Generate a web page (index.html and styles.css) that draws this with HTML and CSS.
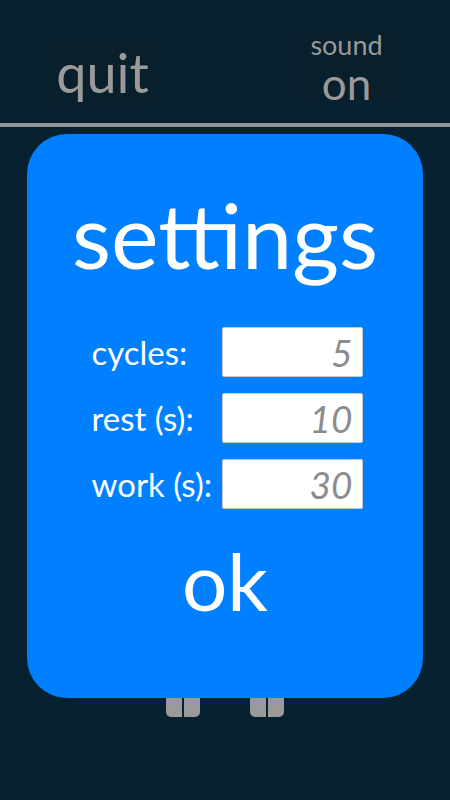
FILE: index.html
```html
<!DOCTYPE html>
<html lang="en">
<head>
<meta charset="utf-8">
<title>settings</title>
<link rel="stylesheet" href="styles.css">
</head>
<body>
<div class="screen">
  <header class="topbar">
    <button class="top-btn quit">quit</button>
    <button class="top-btn sound"><span class="sound-label">sound</span><span class="sound-state">on</span></button>
  </header>
  <div class="rule"></div>
  <main class="stage">
    <div class="controls">
      <div class="pause"><span class="half left"></span><span class="half right"></span></div>
      <div class="pause"><span class="half left"></span><span class="half right"></span></div>
    </div>
  </main>
  <section class="modal">
    <h1 class="title">settings</h1>
    <form class="form">
      <label class="label" for="cycles">cycles:</label>
      <input class="field" id="cycles" type="text" placeholder="5">
      <label class="label" for="rest">rest (s):</label>
      <input class="field" id="rest" type="text" placeholder="10">
      <label class="label" for="work">work (s):</label>
      <input class="field" id="work" type="text" placeholder="30">
    </form>
    <button class="ok">ok</button>
  </section>
</div>
</body>
</html>
```
FILE: styles.css
```css
* { box-sizing: border-box; }
html, body {
  margin: 0;
  padding: 0;
  background: #072131;
  font-family: "Lato", "DejaVu Sans", sans-serif;
}
.screen {
  position: relative;
  width: 450px;
  height: 800px;
  overflow: hidden;
}
.topbar {
  display: flex;
  justify-content: space-between;
  align-items: flex-start;
  height: 123px;
  padding: 0 50px 0 48px;
}
.top-btn {
  border: none;
  background: #0a1f2c;
  color: #9a9a9a;
  font-family: inherit;
  font-weight: 400;
  padding: 0;
  width: 109px;
  height: 70px;
}
.quit {
  margin-top: 38px;
  font-size: 54px;
  line-height: 1;
}
.sound {
  margin-top: 30px;
  width: 107px;
  display: flex;
  flex-direction: column;
  align-items: center;
  justify-content: flex-start;
}
.sound-label {
  font-size: 27px;
  line-height: 30px;
}
.sound-state {
  font-size: 44px;
  line-height: 46px;
}
.rule {
  height: 4px;
  background: #959595;
}
.stage {
  display: flex;
  justify-content: center;
  padding-top: 530px;
}
.controls {
  display: flex;
  gap: 50px;
}
.pause {
  display: flex;
  gap: 2px;
  height: 60px;
}
.half {
  width: 16px;
  background: #9a9a9a;
}
.half.left { border-bottom-left-radius: 5px; }
.half.right { border-bottom-right-radius: 5px; }
.modal {
  position: absolute;
  left: 27px;
  top: 134px;
  width: 396px;
  height: 564px;
  border-radius: 40px;
  background: #0080ff;
  display: flex;
  flex-direction: column;
  align-items: center;
  color: #fff;
}
.title {
  margin: 50px 0 0;
  font-weight: 400;
  font-size: 90px;
  line-height: 100px;
}
.form {
  display: grid;
  grid-template-columns: 130px 141px;
  row-gap: 16px;
  margin-top: 43px;
  margin-left: 4px;
}
.label {
  font-size: 33px;
  font-weight: 400;
  line-height: 50px;
  white-space: nowrap;
}
.field {
  width: 141px;
  height: 50px;
  border: 1px solid #c8c8c8;
  border-radius: 2px;
  background: #fff;
  text-align: right;
  padding: 0 9px 0 0;
  font-family: inherit;
  font-style: italic;
  font-weight: 400;
  font-size: 37px;
  color: #888;
}
.field::placeholder {
  color: #8c8c8c;
  opacity: 1;
}
.ok {
  margin-top: 26px;
  border: none;
  background: none;
  color: #fff;
  font-family: inherit;
  font-weight: 400;
  font-size: 80px;
  line-height: 90px;
  padding: 0;
}
```
